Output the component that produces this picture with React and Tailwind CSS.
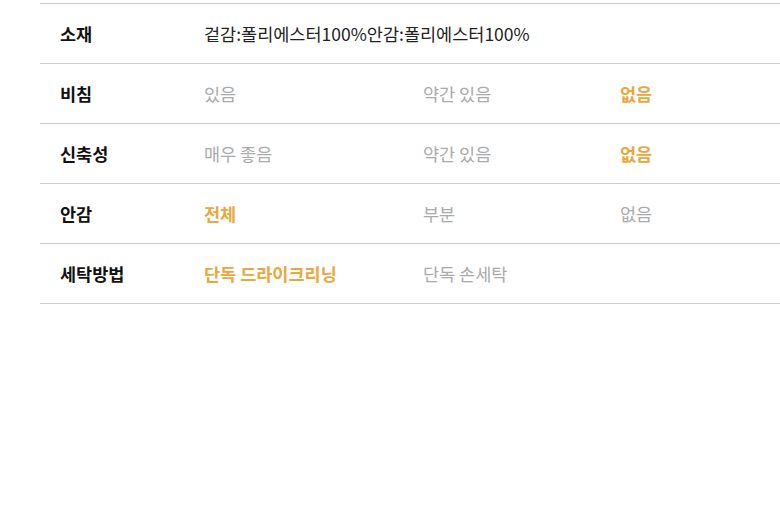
export default function App() {
  const O = "text-[#e9a73e] font-bold";
  const G = "text-[#aaaaaa]";
  const rows = [
    { label: "소재", full: "겉감:폴리에스터100%안감:폴리에스터100%" },
    { label: "비침", cells: [["있음", G], ["약간 있음", G], ["없음", O]] },
    { label: "신축성", cells: [["매우 좋음", G], ["약간 있음", G], ["없음", O]] },
    { label: "안감", cells: [["전체", O], ["부분", G], ["없음", G]] },
    { label: "세탁방법", cells: [["단독 드라이크리닝", O], ["단독 손세탁", G], ["", G]] },
  ];
  return (
    <div
      className="w-[780px] h-[520px] bg-white pt-[3px] pl-[40px]"
      style={{ fontFamily: '"Noto Sans CJK KR", "Noto Sans", sans-serif' }}
    >
      <div className="border-t border-[#cccccc]">
        {rows.map((r) => (
          <div
            key={r.label}
            className="grid grid-cols-[164px_219px_197px_1fr] h-[60px] items-center pt-[1px] border-b border-[#cccccc] text-[17.5px]"
          >
            <div className="pl-5 font-bold text-[#111111]">{r.label}</div>
            {r.full ? (
              <div className="col-span-3 text-[#222222]">{r.full}</div>
            ) : (
              r.cells.map(([t, c], i) => (
                <div key={i} className={c}>
                  {t}
                </div>
              ))
            )}
          </div>
        ))}
      </div>
    </div>
  );
}
